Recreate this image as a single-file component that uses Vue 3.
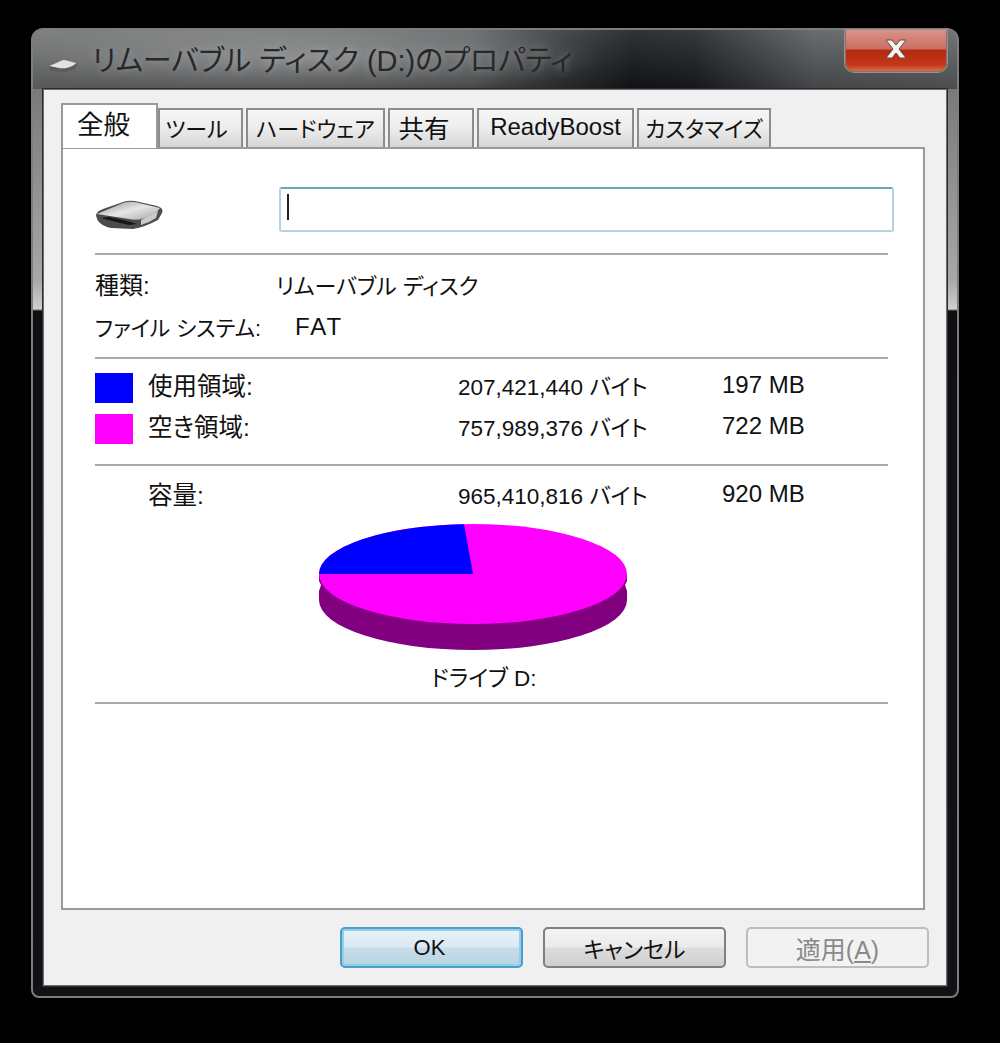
<script setup>
const tabs = [
  { label: 'ツール', width: 85, kind: 'short' },
  { label: 'ハードウェア', width: 139, kind: 'kana' },
  { label: '共有', width: 86, kind: 'kanji' },
  { label: 'ReadyBoost', width: 157, kind: 'latin' },
  { label: 'カスタマイズ', width: 134, kind: 'kana' }
]

const usage = [
  { label: '使用領域:', bytes: '207,421,440 バイト', size: '197 MB', color: 'blue' },
  { label: '空き領域:', bytes: '757,989,376 バイト', size: '722 MB', color: 'magenta' }
]
</script>

<template>
  <div class="window">
    <div class="titlebar">
      <svg class="title-icon" viewBox="0 0 68 30" width="30" height="14">
        <path d="M2 17 L30 3 Q34 1 40 2 L62 7 Q67 9 66 13 L62 20 Q48 27 36 29 L8 26 Q0 23 2 17Z" fill="#5b5b5b" />
        <path d="M3 15 L30 3 Q34 1 40 2 L64 8 Q60 14 44 19 Q36 21 28 20 Z" fill="#e2e2e2" />
      </svg>
      <span class="title-text">リムーバブル ディスク (D:)のプロパティ</span>
      <button class="close-btn">
        <svg viewBox="0 0 24 20" width="24" height="20">
          <path d="M2 1 H8 L12 6 L16 1 H22 L15 10 L22 19 H16 L12 14 L8 19 H2 L9 10 Z" fill="#f2f2f2" stroke="#6d4a44" stroke-width="1" />
        </svg>
      </button>
    </div>

    <div class="client">
      <div class="tabs">
        <div class="tab active">全般</div>
        <div
          v-for="t in tabs"
          :key="t.label"
          class="tab"
          :class="t.kind"
          :style="{ width: t.width + 'px' }"
        >{{ t.label }}</div>
      </div>

      <div class="panel">
        <div class="head">
          <svg class="drive" viewBox="0 0 68 30" width="68" height="30">
            <defs>
              <linearGradient id="driveTop" x1="0" y1="0" x2="1" y2="1">
                <stop offset="0" stop-color="#8f8f8f" />
                <stop offset="0.5" stop-color="#e6e6e6" />
                <stop offset="1" stop-color="#a5a5a5" />
              </linearGradient>
            </defs>
            <path d="M1 15 Q2 11 8 9 L28 2 Q33 0 40 1 L62 6 Q69 8 67 13 L63 20 Q50 27 38 29 L16 28 Q2 25 1 15Z" fill="#4c4c4c" />
            <path d="M2 14 L28 3 Q33 1 40 2 L65 8 Q62 13 50 18 Q42 21 34 19 Z" fill="url(#driveTop)" />
            <path d="M6 18 Q20 22 34 25 L42 24 Q30 20 14 17 Z" fill="#161616" />
            <path d="M46 20 L63 11 L61 18 Q54 23 46 25 Z" fill="#c9c9c9" />
          </svg>
          <div class="name-input"><span class="caret"></span></div>
        </div>

        <div class="sep first"></div>

        <div class="info">
          <div class="info-row">
            <span class="info-label">種類:</span>
            <span class="info-value">リムーバブル ディスク</span>
          </div>
          <div class="info-row">
            <span class="info-label fs-label">ファイル システム:</span>
            <span class="info-value fs">FAT</span>
          </div>
        </div>

        <div class="sep"></div>

        <div class="usage">
          <div v-for="u in usage" :key="u.label" class="usage-row">
            <span class="swatch" :style="{ background: u.color }"></span>
            <span>{{ u.label }}</span>
            <span class="bytes">{{ u.bytes }}</span>
            <span>{{ u.size }}</span>
          </div>
        </div>

        <div class="sep"></div>

        <div class="usage-row total">
          <span></span>
          <span>容量:</span>
          <span class="bytes">965,410,816 バイト</span>
          <span>920 MB</span>
        </div>

        <svg class="pie" viewBox="0 0 310 128" width="310" height="128">
          <path d="M1 52 V77 A154 50 0 0 0 309 77 V52 Z" fill="#800080" />
          <ellipse cx="155" cy="51" rx="154" ry="50" fill="#ff00ff" />
          <path d="M155 51 L146 1.2 A154 50 0 0 0 1 51 Z" fill="#0000ff" />
          <path d="M1 58 L3 62 L1 68 Z M309 58 L307 62 L309 68 Z" fill="#fff" />
        </svg>

        <div class="drive-label">ドライブ D:</div>

        <div class="sep"></div>
      </div>

      <div class="footer">
        <button class="btn default">OK</button>
        <button class="btn kana">キャンセル</button>
        <button class="btn disabled">適用(<u>A</u>)</button>
      </div>
    </div>
  </div>
</template>

<style scoped>
.window {
  box-sizing: border-box;
  width: 928px;
  height: 970px;
  margin: 28px 0 0 31px;
  padding: 0 10px 10px;
  display: flex;
  flex-direction: column;
  border: 2px solid #7d7d7d;
  border-radius: 12px 12px 8px 8px;
  background: linear-gradient(180deg, #6b6b6b 0, #a8a8a8 250px, #cfcfcf 279px, #0d0f12 281px, #101215 100%);
  font-family: "Liberation Sans", "Noto Sans CJK JP", sans-serif;
  color: #111;
  font-feature-settings: "palt" 1;
}

.titlebar {
  height: 59px;
  margin: 0 -10px;
  padding: 0 0 0 15px;
  display: flex;
  align-items: center;
  border-radius: 10px 10px 0 0;
  background:
    linear-gradient(180deg, rgba(255, 255, 255, 0.12) 0, rgba(0, 0, 0, 0.22) 100%),
    radial-gradient(ellipse 300px 40px at 270px 28px, rgba(190, 190, 190, 0.55), rgba(190, 190, 190, 0)),
    linear-gradient(90deg, #6f7172 0, #55585a 440px, #14171a 600px, #1a1d20 660px, #55585b 780px, #5f6263 100%);
}

.title-icon {
  margin: 12px 14px 0 0;
}

.title-text {
  margin-top: -3px;
  font-size: 29px;
  color: #26282a;
  white-space: nowrap;
  text-shadow: 0 0 8px rgba(220, 220, 220, 0.4);
}

.close-btn {
  box-sizing: border-box;
  width: 102px;
  height: 42px;
  margin: -17px 10px 0 auto;
  padding: 0 0 4px;
  display: flex;
  align-items: center;
  justify-content: center;
  border: 1px solid #8a7068;
  border-top: 0;
  border-radius: 0 0 9px 9px;
  box-shadow: 0 0 0 1px #9c9089;
  background: linear-gradient(180deg, #d9938a 0, #cc6f63 45%, #b22a10 50%, #c4371a 85%, #d86a4e 100%);
}

.client {
  flex: 1;
  display: flex;
  flex-direction: column;
  border: 1px solid #6c6c6c;
  background: #f0f0f0;
  box-shadow: 0 0 0 1px #2b2d30;
}

.tabs {
  display: flex;
  align-items: flex-end;
  gap: 3px;
  height: 44px;
  margin: 13px 0 0 17px;
  position: relative;
  z-index: 1;
}

.tab {
  box-sizing: border-box;
  height: 39px;
  padding-bottom: 4px;
  display: flex;
  align-items: center;
  justify-content: center;
  border: 2px solid #8c8c8c;
  border-bottom: 0;
  background: linear-gradient(180deg, #f6f6f6 0, #ececec 50%, #d6d6d6 100%);
  font-size: 22px;
  white-space: nowrap;
}

.tab.short {
  padding-right: 8px;
}

.tab.kanji {
  padding-right: 14px;
  font-size: 25.5px;
}

.tab.latin {
  font-size: 24px;
}

.tab.active {
  width: 97px;
  height: 45px;
  margin-bottom: -1px;
  margin-right: -3px;
  padding: 0 12px 8px 0;
  background: #fff;
  border-color: #9a9a9a;
  font-size: 26.5px;
}

.panel {
  flex: 1;
  box-sizing: border-box;
  margin: 0 21px 0 17px;
  padding: 38px 35px 0 32px;
  border: 2px solid #9a9a9a;
  background: #fff;
}

.head {
  display: flex;
  align-items: center;
  justify-content: space-between;
  margin-right: -6px;
}

.drive {
  align-self: flex-end;
  margin-bottom: 2px;
}

.name-input {
  box-sizing: border-box;
  width: 615px;
  height: 45px;
  padding: 5px 6px;
  border: 2px solid #b5d3df;
  border-top-color: #6ea3b5;
  border-radius: 3px;
  background: #fff;
}

.caret {
  display: block;
  width: 2px;
  height: 26px;
  background: #222;
}

.sep {
  height: 2px;
  background: #a9a9a9;
  margin-top: 7px;
}

.sep.first {
  margin-top: 21px;
}

.info {
  padding: 7px 0 2px;
}

.info-row {
  height: 43px;
  display: flex;
  align-items: center;
  font-size: 24px;
}

.info-label {
  width: 181px;
  white-space: nowrap;
}

.info-label.fs-label {
  font-size: 21.7px;
}

.info-value {
  font-size: 22px;
}

.info-value.fs {
  margin-left: 19px;
  font-size: 24px;
  letter-spacing: 2px;
}

.usage {
  padding: 5px 0 11px;
}

.usage-row {
  height: 41px;
  display: grid;
  grid-template-columns: 53px 310px 264px 1fr;
  align-items: center;
  font-size: 24.5px;
  white-space: nowrap;
}

.usage-row span:last-child {
  font-size: 24px;
}

.usage-row .bytes {
  font-size: 22.5px;
}

.swatch {
  display: block;
  width: 38px;
  height: 30px;
  margin-top: 7px;
}

.total {
  margin-top: 7px;
}

.pie {
  display: block;
  margin: 9px 0 0 223px;
}

.drive-label {
  margin: 11px 0 0 336px;
  height: 33px;
  line-height: 33px;
  font-size: 22.5px;
}

.footer {
  height: 75px;
  display: flex;
  justify-content: flex-end;
  align-items: flex-start;
  gap: 20px;
  padding: 17px 17px 0 0;
  box-sizing: border-box;
}

.btn {
  box-sizing: border-box;
  width: 183px;
  height: 41px;
  padding: 0;
  border: 2px solid #7f7f7f;
  border-radius: 5px;
  background: linear-gradient(180deg, #f3f3f3 0, #ebebeb 48%, #dcdcdc 52%, #cfcfcf 100%);
  font-family: inherit;
  font-feature-settings: inherit;
  font-size: 25px;
  color: #111;
}

.btn.kana {
  font-size: 22.5px;
}

.btn.default {
  padding-right: 4px;
  border-color: #4f9cc4;
  background: linear-gradient(180deg, #e9f3f8 0, #dbe9f1 48%, #c8dde8 52%, #b7d4e2 100%);
  box-shadow: inset 0 0 0 2px #8fd0ec;
  font-size: 22px;
}

.btn.disabled {
  border-color: #bdbdbd;
  background: #f2f2f2;
  color: #8a8a8a;
}
</style>

<style>
html,
body {
  background: #000;
}
</style>
